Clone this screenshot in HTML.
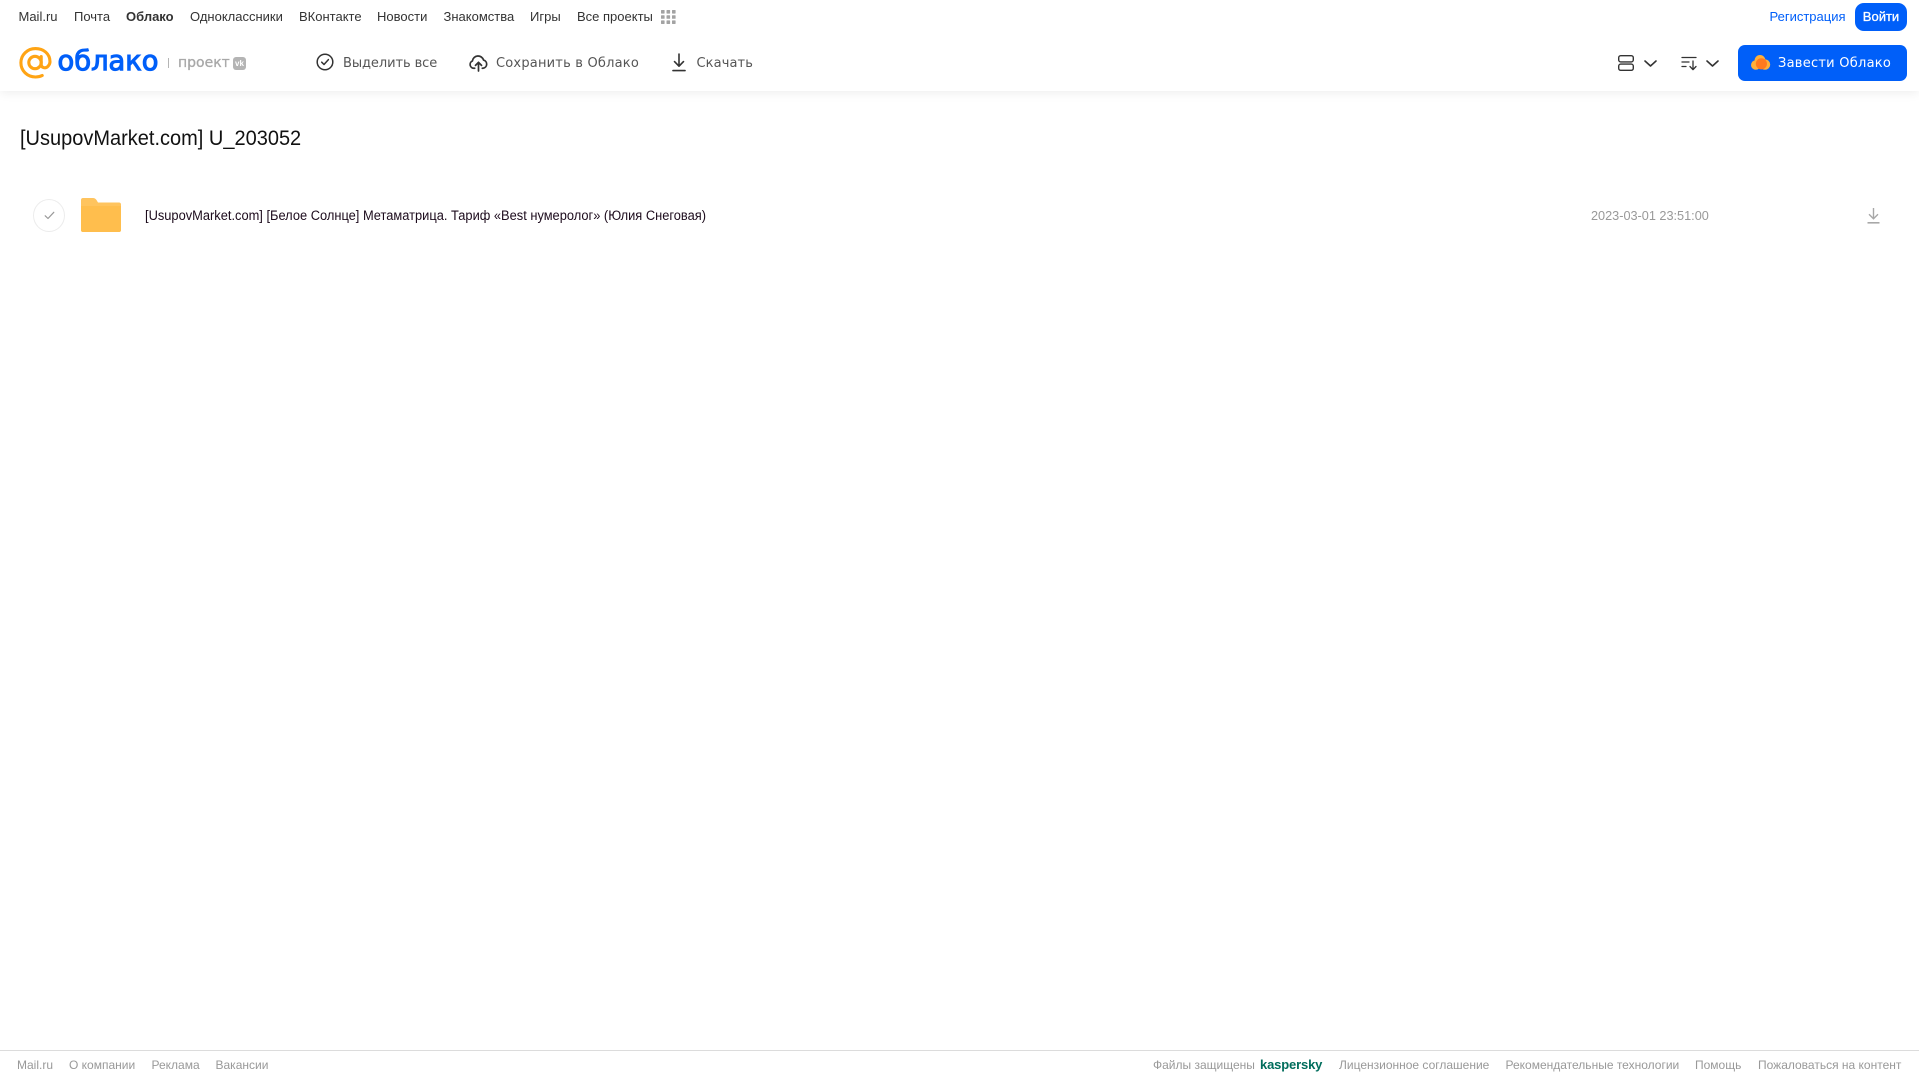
<!DOCTYPE html>
<html lang="ru">
<head>
<meta charset="utf-8">
<title>[UsupovMarket.com] U_203052</title>
<style>
html,body{margin:0;padding:0;background:#fff}
body{position:relative;width:1919px;height:1079px;overflow:hidden;font-family:"Liberation Sans","Noto Sans CJK SC",sans-serif}
a{color:inherit;text-decoration:none}
.t{position:absolute;white-space:nowrap;line-height:20px;height:20px}
.abs{position:absolute;display:block}
#hdr{position:absolute;left:0;top:0;width:1919px;height:91px;background:#fff;box-shadow:0 2px 10px rgba(0,0,0,.07)}
.nav{top:7px;font-size:13px;color:#333}
.tb{top:54px;font-family:"DejaVu Sans",sans-serif;font-size:13px;color:#555}
.ft{top:1055px;font-size:12px;color:#999}
</style>
</head>
<body>
<div id="hdr">
  <a class="t nav" style="left:18.5px">Mail.ru</a>
  <a class="t nav" style="left:74px">Почта</a>
  <a class="t nav" style="left:126px;font-weight:700">Облако</a>
  <a class="t nav" style="left:190px">Одноклассники</a>
  <a class="t nav" style="left:299px">ВКонтакте</a>
  <a class="t nav" style="left:377px">Новости</a>
  <a class="t nav" style="left:443.5px">Знакомства</a>
  <a class="t nav" style="left:530px">Игры</a>
  <a class="t nav" style="left:577px">Все проекты</a>
  <svg class="abs" style="left:661px;top:10px" width="15" height="14" viewBox="0 0 15 14" fill="#a3a3a3">
    <rect x="0" y="0" width="3.6" height="3.6" rx=".6"/><rect x="5.5" y="0" width="3.6" height="3.6" rx=".6"/><rect x="11" y="0" width="3.6" height="3.6" rx=".6"/>
    <rect x="0" y="5.2" width="3.6" height="3.6" rx=".6"/><rect x="5.5" y="5.2" width="3.6" height="3.6" rx=".6"/><rect x="11" y="5.2" width="3.6" height="3.6" rx=".6"/>
    <rect x="0" y="10.4" width="3.6" height="3.6" rx=".6"/><rect x="5.5" y="10.4" width="3.6" height="3.6" rx=".6"/><rect x="11" y="10.4" width="3.6" height="3.6" rx=".6"/>
  </svg>

  <a class="t nav" style="left:1769.5px;color:#005ff9">Регистрация</a>
  <a class="abs" style="left:1855px;top:3px;width:52px;height:28px;border-radius:9px;background:#005ff9;color:#fff;font-size:13px;line-height:27px;text-align:center;-webkit-text-stroke:.3px #fff">Войти</a>

  <!-- logo -->
  <svg class="abs" style="left:18px;top:45px" width="36" height="36" viewBox="0 0 36 36" fill="none">
    <circle cx="17" cy="17.5" r="6.2" stroke="#ffa414" stroke-width="3.1"/>
    <path d="M23.2 11.5V19.5C23.2 23 27.6 23.8 30 21.3C31.6 19.6 32 17.8 32 16.8C32 8.6 25.4 3.6 17.5 3.6C9.3 3.6 2.9 10 2.9 17.8C2.9 25.8 9.3 32 17.5 32C20 32 22.2 31.5 24.2 30.5" stroke="#ffa414" stroke-width="3.1" stroke-linecap="round"/>
  </svg>
  <svg class="abs" style="left:56px;top:40px" width="106" height="40">
    <text x="1.5" y="30" font-family="DejaVu Sans, sans-serif" font-size="28" fill="#005ff9" stroke="#005ff9" stroke-width="1.1" textLength="101" lengthAdjust="spacingAndGlyphs">облако</text>
  </svg>
  <div class="abs" style="left:168px;top:58px;width:1px;height:10px;background:#b5b5b5"></div>
  <span class="t" style="left:178px;top:53px;font-family:'DejaVu Sans',sans-serif;font-size:14px;color:#a8a8a8;-webkit-text-stroke:.3px #a8a8a8">проект</span>
  <div class="abs" style="left:233px;top:57px;width:13px;height:13px;border-radius:3px;background:#b4b4b4;color:#fff;font-size:8px;font-weight:700;line-height:13px;text-align:center">vk</div>

  <!-- toolbar -->
  <svg class="abs" style="left:316px;top:53px" width="18" height="18" viewBox="0 0 18 18" fill="none" stroke="#333" stroke-width="1.5">
    <circle cx="9" cy="9" r="7.8"/><path d="M5.7 9.2L8 11.5L12.4 6.6" stroke-linecap="round" stroke-linejoin="round"/>
  </svg>
  <a class="t tb" style="left:343px;letter-spacing:-.08px">Выделить все</a>

  <svg class="abs" style="left:469px;top:54px" width="19" height="18" viewBox="0 0 20 19" fill="none" stroke="#333" stroke-width="1.8" stroke-linecap="round" stroke-linejoin="round">
    <path d="M6 15H5A4 4 0 0 1 3.6 7.3A6 6 0 0 1 15.3 6.4A4.4 4.4 0 0 1 15 15H14"/>
    <path d="M10 18V9M6.8 12L10 8.8L13.2 12"/>
  </svg>
  <a class="t tb" style="left:496px;letter-spacing:.2px">Сохранить в Облако</a>

  <svg class="abs" style="left:671px;top:53px" width="16" height="19" viewBox="0 0 16 19" fill="none" stroke="#333" stroke-width="1.6" stroke-linecap="round" stroke-linejoin="round">
    <path d="M8 1V13M3.5 8.6L8 13.2L12.5 8.6"/><path d="M2 17.6H14"/>
  </svg>
  <a class="t tb" style="left:696.5px;letter-spacing:.1px">Скачать</a>

  <svg class="abs" style="left:1618px;top:55px" width="16" height="16" viewBox="0 0 16 16" fill="none" stroke="#333" stroke-width="1.4">
    <rect x=".7" y=".7" width="14.6" height="6.2" rx="2"/><rect x=".7" y="9.1" width="14.6" height="6.2" rx="2"/>
  </svg>
  <svg class="abs" style="left:1644px;top:60px" width="13" height="7" viewBox="0 0 13 7" fill="none" stroke="#333" stroke-width="1.6" stroke-linecap="round" stroke-linejoin="round"><path d="M1 1L6.5 6L12 1"/></svg>
  <svg class="abs" style="left:1681px;top:56px" width="17" height="15" viewBox="0 0 17 15" fill="none" stroke="#333" stroke-width="1.3" stroke-linecap="round" stroke-linejoin="round">
    <path d="M1 1.5H15M1 6H8M1 10.5H5"/><path d="M12 5V13.5M9 10.5L12 13.7L15 10.5"/>
  </svg>
  <svg class="abs" style="left:1706px;top:60px" width="13" height="7" viewBox="0 0 13 7" fill="none" stroke="#333" stroke-width="1.6" stroke-linecap="round" stroke-linejoin="round"><path d="M1 1L6.5 6L12 1"/></svg>

  <a class="abs" style="left:1738px;top:45px;width:169px;height:36px;border-radius:7px;background:#005ff9"></a>
  <svg class="abs" style="left:1750px;top:54px" width="21" height="17" viewBox="0 0 21 17">
    <g fill="#ffb03a"><circle cx="5.8" cy="11" r="4.8"/><circle cx="10" cy="6.4" r="5.4"/><circle cx="15" cy="10.6" r="5.2"/></g>
    <circle cx="11.4" cy="9.8" r="5.6" fill="#ff7a1f"/>
  </svg>
  <a class="t tb" style="left:1778px;color:#fff;letter-spacing:.25px">Завести Облако</a>
</div>

<h1 class="t" style="left:20px;top:126px;margin:0;font-size:21.5px;font-weight:400;line-height:24px;height:24px;color:#111;transform:scaleX(.93);transform-origin:0 50%">[UsupovMarket.com] U_203052</h1>

<div class="abs" style="left:33px;top:199px;width:30px;height:31px;border:1px solid #ececec;border-radius:50%"></div>
<svg class="abs" style="left:43.5px;top:211px" width="11" height="9" viewBox="0 0 11 9" fill="none" stroke="#999" stroke-width="1.2" stroke-linecap="round" stroke-linejoin="round"><path d="M1.2 4.8L4 7.5L9.8 1.3"/></svg>

<svg class="abs" style="left:81px;top:198px" width="40" height="34" viewBox="0 0 40 34">
  <path d="M2 0H12C13.5 0 14.5 .8 15.5 2L17 4.5H38C39.2 4.5 40 5.3 40 6.5V32C40 33.2 39.2 34 38 34H2C.8 34 0 33.2 0 32V2C0 .8 .8 0 2 0Z" fill="#ffc45e"/>
  <path d="M0 8H40V32C40 33.2 39.2 34 38 34H2C.8 34 0 33.2 0 32Z" fill="#ffbe4d"/>
</svg>

<a class="t" style="left:144.5px;top:206px;font-size:13.4px;color:#1c0b1c;transform:scaleX(.96);transform-origin:0 50%">[UsupovMarket.com] [Белое Солнце] Метаматрица. Тариф «Best нумеролог» (Юлия Снеговая)</a>
<span class="t" style="left:1591px;top:206px;font-size:12.7px;color:#999">2023-03-01 23:51:00</span>

<svg class="abs" style="left:1867px;top:207px" width="13" height="17" viewBox="0 0 13 17" fill="none" stroke="#a8a8a8" stroke-width="1.4">
  <path d="M6.5 1V11.5M2 7.2L6.5 11.7L11 7.2"/><path d="M.5 15.8H12.5" stroke-width="1.6"/>
</svg>

<div class="abs" style="left:0;top:1050px;width:1919px;height:1px;background:#dcdcdc"></div>
<a class="t ft" style="left:17px">Mail.ru</a>
<a class="t ft" style="left:69px">О компании</a>
<a class="t ft" style="left:151.5px">Реклама</a>
<a class="t ft" style="left:215.5px">Вакансии</a>
<span class="t ft" style="left:1153px">Файлы защищены</span>
<a class="t ft" style="left:1260px;color:#006d5c;font-weight:700;font-size:13px;letter-spacing:-.15px">kaspersky</a>
<a class="t ft" style="left:1339px">Лицензионное соглашение</a>
<a class="t ft" style="left:1505.5px">Рекомендательные технологии</a>
<a class="t ft" style="left:1695px">Помощь</a>
<a class="t ft" style="left:1758px">Пожаловаться на контент</a>
</body>
</html>
